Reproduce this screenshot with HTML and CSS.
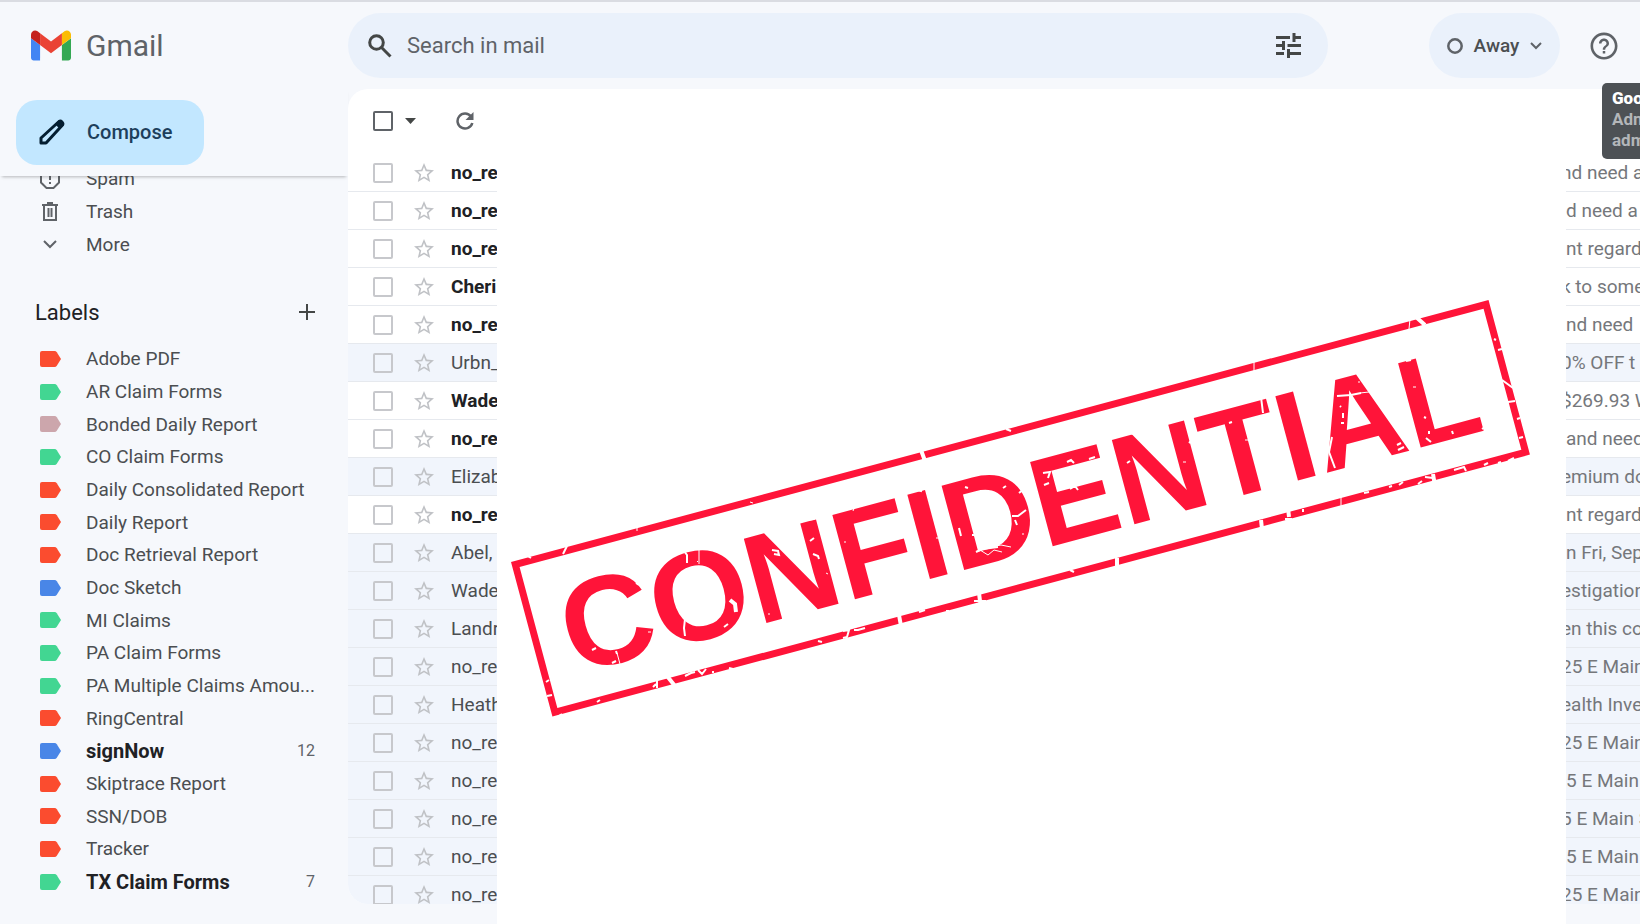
FILE: index.html
```html
<!DOCTYPE html>
<html lang="en">
  <head>
    <meta charset="utf-8">
    <title>Gmail</title>
    <link rel="stylesheet" href="styles.css">
  </head>
  <body>
    <!-- Shared icons -->
    <svg class="sprite" aria-hidden="true">
      <symbol id="tag" viewBox="0 0 21 16">
        <path d="M2 0h12.500q1.500 0 2.300 1.200L21 8l-4.200 6.800Q16 16 14.500 16H2q-2 0-2-2V2q0-2 2-2z" />
      </symbol>
      <symbol id="star" viewBox="0 0 24 24">
        <path d="M22 9.240l-7.190-.62L12 2 9.190 8.630 2 9.240l5.460 4.730L5.820 21 12 17.270 18.180 21l-1.630-7.030L22 9.240zM12 15.400l-3.760 2.270 1-4.280-3.320-2.880 4.380-.38L12 6.100l1.710 4.040 4.380.38-3.320 2.880 1 4.280L12 15.400z" />
      </symbol>
    </svg>

    <header class="topbar">
      <div class="brand">
        <svg class="logo" viewBox="52 42 88 66">
          <path fill="#4285f4" d="M58 108h14V74L52 59v43c0 3.320 2.690 6 6 6" />
          <path fill="#34a853" d="M120 108h14c3.320 0 6-2.690 6-6V59l-20 15" />
          <path fill="#fbbc04" d="M120 48v26l20-15v-8c0-7.420-8.470-11.650-14.400-7.200" />
          <path fill="#ea4335" d="M72 74V48l24 18 24-18v26L96 92" />
          <path fill="#c5221f" d="M52 51v8l20 15V48l-5.600-4.200c-5.940-4.450-14.400-.22-14.400 7.200" />
        </svg>
        <span>Gmail</span>
      </div>
      <form class="search">
        <svg class="search-icon" viewBox="0 0 24 24" fill="none" stroke="#444746" stroke-width="3">
          <circle cx="8.500" cy="8.500" r="6.800" />
          <path d="M13.300 13.300L22.500 22.500" />
        </svg>
        <input type="text" placeholder="Search in mail" aria-label="Search in mail">
        <button type="button" class="icon-btn" aria-label="Show search options">
          <svg class="tune-icon" viewBox="0 0 25 25" fill="none" stroke="#444746" stroke-width="3">
            <path d="M0 4.500h14M17.500 4.500H25M18 0v9M0 12.500h7M11.500 12.500H25M7.500 8v9M0 20.500h8M12 20.500h13M12.500 16v9" />
          </svg>
        </button>
      </form>
      <div class="tools">
        <button type="button" class="status">
          <svg class="status-dot" viewBox="0 0 16 16" fill="none" stroke="#5f6368" stroke-width="2.500">
            <circle cx="8" cy="8" r="6.700" />
          </svg>
          Away
          <svg class="status-arrow" viewBox="0 0 12 8" fill="none" stroke="#5f6368" stroke-width="2">
            <path d="M1 1l5 5 5-5" />
          </svg>
        </button>
        <button type="button" class="icon-btn" aria-label="Support">
          <svg class="help-icon" viewBox="0 0 24 24" fill="#5f6368">
            <path d="M11 18h2v-2h-2v2zm1-16.800C6 1.200 1.200 6 1.200 12S6 22.800 12 22.800 22.800 18 22.800 12 18 1.200 12 1.200zm0 19.500c-4.800 0-8.700-3.900-8.700-8.700S7.200 3.300 12 3.300s8.700 3.900 8.700 8.700-3.900 8.700-8.700 8.700zM12 6c-2.210 0-4 1.790-4 4h2c0-1.100.9-2 2-2s2 .9 2 2c0 2-3 1.750-3 5h2c0-2.250 3-2.500 3-5 0-2.210-1.790-4-4-4z" />
          </svg>
        </button>
      </div>
      <div class="tooltip"><b>Google</b><span>Admin</span><span>admin</span></div>
    </header>

    <div class="layout">
      <aside class="sidebar">
        <div class="compose-wrap">
          <button type="button" class="compose">
            <svg viewBox="0 0 26 26" fill="none" stroke="#041e31" stroke-width="3" stroke-linejoin="round">
              <path d="M2 24v-5L20 2.500q1.500-1 3 .5t.5 3L7 24z" />
              <path d="M18 3l5 5" stroke-width="6" />
            </svg>
            Compose
          </button>
        </div>
        <nav class="nav">
          <ul class="folders">
            <li>
              <a href="#">
                <svg viewBox="0 0 20 20" fill="none" stroke="#5f6368" stroke-width="2">
                  <path d="M6.500 1h7L19 6.500v7L13.500 19h-7L1 13.500v-7zM10 5v6M10 13v2" />
                </svg>
                <span>Spam</span>
              </a>
            </li>
            <li>
              <a href="#">
                <svg viewBox="0 0 20 20" fill="none" stroke="#5f6368" stroke-width="2">
                  <path d="M2 3h16M7 1h6M4 3v15h12V3M8.500 6v9M11.500 6v9" />
                </svg>
                <span>Trash</span>
              </a>
            </li>
            <li>
              <a href="#">
                <svg viewBox="0 0 20 20" fill="none" stroke="#5f6368" stroke-width="2">
                  <path d="M4 7l6 6 6-6" />
                </svg>
                <span>More</span>
              </a>
            </li>
          </ul>
          <div class="labels-head">
            <h2>Labels</h2>
            <button type="button" class="icon-btn" aria-label="Create new label">
              <svg class="plus-icon" viewBox="0 0 16 16" fill="none" stroke="#444746" stroke-width="2">
                <path d="M8 0v16M0 8h16" />
              </svg>
            </button>
          </div>
          <ul class="labels">
            <li><a href="#"><svg class="red"><use href="#tag" /></svg><span>Adobe PDF</span></a></li>
            <li><a href="#"><svg class="green"><use href="#tag" /></svg><span>AR Claim Forms</span></a></li>
            <li><a href="#"><svg class="pink"><use href="#tag" /></svg><span>Bonded Daily Report</span></a></li>
            <li><a href="#"><svg class="green"><use href="#tag" /></svg><span>CO Claim Forms</span></a></li>
            <li><a href="#"><svg class="red"><use href="#tag" /></svg><span>Daily Consolidated Report</span></a></li>
            <li><a href="#"><svg class="red"><use href="#tag" /></svg><span>Daily Report</span></a></li>
            <li><a href="#"><svg class="red"><use href="#tag" /></svg><span>Doc Retrieval Report</span></a></li>
            <li><a href="#"><svg class="blue"><use href="#tag" /></svg><span>Doc Sketch</span></a></li>
            <li><a href="#"><svg class="green"><use href="#tag" /></svg><span>MI Claims</span></a></li>
            <li><a href="#"><svg class="green"><use href="#tag" /></svg><span>PA Claim Forms</span></a></li>
            <li><a href="#"><svg class="green"><use href="#tag" /></svg><span>PA Multiple Claims Amou...</span></a></li>
            <li><a href="#"><svg class="red"><use href="#tag" /></svg><span>RingCentral</span></a></li>
            <li class="new"><a href="#"><svg class="blue"><use href="#tag" /></svg><span>signNow</span><em>12</em></a></li>
            <li><a href="#"><svg class="red"><use href="#tag" /></svg><span>Skiptrace Report</span></a></li>
            <li><a href="#"><svg class="red"><use href="#tag" /></svg><span>SSN/DOB</span></a></li>
            <li><a href="#"><svg class="red"><use href="#tag" /></svg><span>Tracker</span></a></li>
            <li class="new"><a href="#"><svg class="green"><use href="#tag" /></svg><span>TX Claim Forms</span><em>7</em></a></li>
          </ul>
        </nav>
      </aside>

      <main class="mail">
        <div class="inbox">
          <div class="toolbar">
            <input type="checkbox" class="check" aria-label="Select all">
            <svg class="caret" viewBox="0 0 11 6" fill="#444746"><path d="M0 0h11L5.500 6z" /></svg>
            <button type="button" class="icon-btn" aria-label="Refresh">
              <svg class="refresh-icon" viewBox="0 0 18 18" fill="none" stroke="#5f6368" stroke-width="2.500">
                <path d="M15 4.500A7.500 7.500 0 1 0 16.300 11" />
                <path d="M17.500 0v8h-8z" fill="#5f6368" stroke="none" />
              </svg>
            </button>
          </div>
          <ul class="rows">
            <li class="unread"><input type="checkbox" class="check" aria-label="Select"><svg class="star"><use href="#star" /></svg><span class="sender">no_re</span><span class="snippet cut">nd need a</span></li>
            <li class="unread"><input type="checkbox" class="check" aria-label="Select"><svg class="star"><use href="#star" /></svg><span class="sender">no_re</span><span class="snippet">d need a</span></li>
            <li class="unread"><input type="checkbox" class="check" aria-label="Select"><svg class="star"><use href="#star" /></svg><span class="sender">no_re</span><span class="snippet">nt regard</span></li>
            <li class="unread"><input type="checkbox" class="check" aria-label="Select"><svg class="star"><use href="#star" /></svg><span class="sender">Cheri</span><span class="snippet cut">k to some</span></li>
            <li class="unread"><input type="checkbox" class="check" aria-label="Select"><svg class="star"><use href="#star" /></svg><span class="sender">no_re</span><span class="snippet">nd need</span></li>
            <li><input type="checkbox" class="check" aria-label="Select"><svg class="star"><use href="#star" /></svg><span class="sender">Urbn_</span><span class="snippet cut">0% OFF t</span></li>
            <li class="unread"><input type="checkbox" class="check" aria-label="Select"><svg class="star"><use href="#star" /></svg><span class="sender">Wade</span><span class="snippet cut">$269.93 W</span></li>
            <li class="unread"><input type="checkbox" class="check" aria-label="Select"><svg class="star"><use href="#star" /></svg><span class="sender">no_re</span><span class="snippet">and need</span></li>
            <li><input type="checkbox" class="check" aria-label="Select"><svg class="star"><use href="#star" /></svg><span class="sender">Elizab</span><span class="snippet cut">emium do</span></li>
            <li class="unread"><input type="checkbox" class="check" aria-label="Select"><svg class="star"><use href="#star" /></svg><span class="sender">no_re</span><span class="snippet">nt regard</span></li>
            <li><input type="checkbox" class="check" aria-label="Select"><svg class="star"><use href="#star" /></svg><span class="sender">Abel,</span><span class="snippet">n Fri, Sep</span></li>
            <li><input type="checkbox" class="check" aria-label="Select"><svg class="star"><use href="#star" /></svg><span class="sender">Wade</span><span class="snippet cut">estigation</span></li>
            <li><input type="checkbox" class="check" aria-label="Select"><svg class="star"><use href="#star" /></svg><span class="sender">Landr</span><span class="snippet cut">en this co</span></li>
            <li><input type="checkbox" class="check" aria-label="Select"><svg class="star"><use href="#star" /></svg><span class="sender">no_re</span><span class="snippet cut">25 E Main</span></li>
            <li><input type="checkbox" class="check" aria-label="Select"><svg class="star"><use href="#star" /></svg><span class="sender">Heath</span><span class="snippet cut">ealth Inve</span></li>
            <li><input type="checkbox" class="check" aria-label="Select"><svg class="star"><use href="#star" /></svg><span class="sender">no_re</span><span class="snippet cut">25 E Main</span></li>
            <li><input type="checkbox" class="check" aria-label="Select"><svg class="star"><use href="#star" /></svg><span class="sender">no_re</span><span class="snippet">5 E Main</span></li>
            <li><input type="checkbox" class="check" aria-label="Select"><svg class="star"><use href="#star" /></svg><span class="sender">no_re</span><span class="snippet cut">5 E Main S</span></li>
            <li><input type="checkbox" class="check" aria-label="Select"><svg class="star"><use href="#star" /></svg><span class="sender">no_re</span><span class="snippet">5 E Main</span></li>
            <li><input type="checkbox" class="check" aria-label="Select"><svg class="star"><use href="#star" /></svg><span class="sender">no_re</span><span class="snippet cut">25 E Main</span></li>
          </ul>
        </div>

        <!-- Cover sheet over the private part of the list -->
        <div class="redacted">
          <svg class="stamp" viewBox="0 0 1020 418">
            <g transform="translate(1 263) rotate(-15)">
              <rect class="stamp-frame" x="3.500" y="3.500" width="1005" height="153" />
              <text class="stamp-text" x="32" y="125">CONFIDENTIAL</text>
            </g>
            <!-- worn spots -->
            <g class="wear">
              <path class="thick" d="M411 151l4 11M389 316l2 11M469 294l1 8 2 6M157 377l8 10M751 221l1 9M778 209l1 9M906 18l9 8M220 301l5 4 1 8M607 259v8M923 175l2 12" />
              <path class="mid" d="M16 256l5 3M57 247l-4 8M126 284l3 2M82 351l4-2M106 352l1 3M102 364l4-2M174 252l3 4v8M175 320l-1 9 1 8M214 328l4-3M262 251l6 1 1 4-5-1M297 221l7-1 4-2M300 242l4-3M303 255l5 2 1 3M455 188l3 1M408 191l3 1 1-3M449 229l2 8M462 236h2M466 253l6-3 8-1 8-1M493 189l3-2M509 194l5-4M502 217h6l8-6M505 221l2 5M553 152l5-1M557 163l4-2 3 3M533 174l7-1-2 6M534 186l5-2M560 190l5-3 3 4M579 160l6-2M586 179v3M619 133l4 2M617 164l3-2M679 144l4-4M719 124l3-1M751 98l2 16M827 97l14-1 10-2M830 107l1 1M833 114v5M831 124h3M822 138l-3 15 6 16M887 146l4-2M888 151l6-3M896 62l5-1M914 118l2 1M924 115v3M919 132v3M916 139l5 4M942 132l1 3M972 130l3-2M496 130l5 2M984 40l2 1M988 51l4-1M992 81l11 8M998 103l7-1M1007 120l3-1M1009 139l4-1M998 162l6-3M988 164l3-1M974 166l4-2M944 171l10-3 2 4M915 178l8 1M908 185l4-3M889 186l4-3M879 188l3-1M854 194l5-1M793 210v3M775 220h7M560 271l4 2M409 313l6-2M436 312h3M333 332l6-1-2 7-4 1M344 331h4l7-2M308 342l4 1M219 369l4 1M203 372v2M188 371l4 4 4-5M175 377l6-3 4-1M147 382v7M143 388l3-3M87 403l3-2M49 417l3-2M36 383l3-2M37 397l5-1M464 302h12" />
              <path class="thin" d="M189 248v17M127 227v5M240 203l3 1M187 262l1 1M107 354l3 11M334 243h2M343 212l2-5M426 239h2M316 274l2 1M258 315h2M470 251l8 5 6-5 8 2M481 248l10-2 10 2M495 237h3M512 235h2M556 176l-9 3M673 163h3M661 173l2 2M735 141h3M744 62v10M758 92l3 12M806 172l2 3M850 94l9-1M848 83h2M903 88h3M831 198v10M900 20l-1 10M138 333h3M244 316l3 2M1002 168l4-2" />
            </g>
          </svg>
        </div>
      </main>
    </div>
  </body>
</html>
```

FILE: styles.css
```css
:root {
  --bg: #f6f8fc;
  --surface: #fff;
  --pill: #eaf1fb;
  --read: #f1f5fc;
  --line: #e6e9ee;
  --text: #202124;
  --text-mid: #4b4e51;
  --text-light: #5f6368;
  --stamp: #ff1439;
}

* {
  box-sizing: border-box;
}

body {
  margin: 0;
  height: 100vh;
  display: flex;
  flex-direction: column;
  overflow: hidden;
  background: var(--bg);
  border-top: 2px solid #dadce2;
  font-family: Roboto, "Liberation Sans", sans-serif;
  font-size: 19px;
  color: var(--text-mid);
}

ul {
  list-style: none;
  margin: 0;
  padding: 0;
}

button {
  font-family: inherit;
  border: none;
  cursor: pointer;
}

svg {
  flex: none;
  display: block;
}

.sprite {
  position: absolute;
  width: 0;
  height: 0;
}

.icon-btn {
  background: none;
  padding: 0;
}

/* Header */
.topbar {
  position: relative;
  z-index: 3;
  flex: none;
  display: flex;
  align-items: center;
  height: 87px;
}

.brand {
  flex: none;
  display: flex;
  align-items: center;
  gap: 15px;
  width: 348px;
  padding-left: 31px;
  font-size: 30px;
  color: var(--text-light);
}

.logo {
  width: 40px;
  height: 31px;
}

.search {
  flex: 1;
  display: flex;
  align-items: center;
  height: 65px;
  padding: 0 27px 0 20px;
  border-radius: 33px;
  background: var(--pill);
}

.search-icon {
  width: 24px;
  height: 24px;
}

.search input {
  flex: 1;
  min-width: 0;
  margin-left: 15px;
  padding: 0;
  border: none;
  outline: none;
  background: none;
  font-family: inherit;
  font-size: 22px;
}

.search input::placeholder {
  color: var(--text-light);
}

.tune-icon {
  width: 25px;
  height: 25px;
}

.tools {
  flex: none;
  display: flex;
  align-items: center;
  gap: 29px;
  width: 312px;
  padding-left: 101px;
}

.status {
  display: flex;
  align-items: center;
  justify-content: center;
  gap: 11px;
  width: 131px;
  height: 65px;
  border-radius: 33px;
  background: var(--pill);
  color: var(--text-mid);
  font-size: 19px;
  font-weight: 500;
}

.status-dot {
  width: 16px;
  height: 16px;
}

.status-arrow {
  width: 12px;
  height: 8px;
}

.help-icon {
  width: 30px;
  height: 30px;
}

.tooltip {
  position: absolute;
  top: 81px;
  right: 0;
  display: flex;
  flex-direction: column;
  width: 38px;
  height: 76px;
  padding: 5px 0 0 10px;
  overflow: hidden;
  border-radius: 5px 0 0 5px;
  background: #4d5155;
  color: #b3b6b9;
  font-size: 17px;
  font-weight: 700;
  line-height: 21px;
}

.tooltip b {
  color: #fff;
}

.layout {
  flex: 1;
  display: flex;
  min-height: 0;
}

/* Sidebar */
.sidebar {
  flex: none;
  display: flex;
  flex-direction: column;
  width: 348px;
}

.compose-wrap {
  position: relative;
  flex: none;
  height: 87px;
  padding: 11px 0 0 16px;
  background: var(--bg);
  box-shadow: 0 3px 3px -2px rgba(60, 64, 67, 0.35);
}

.compose {
  display: flex;
  align-items: center;
  gap: 22px;
  width: 188px;
  height: 65px;
  padding: 0 0 2px 23px;
  border-radius: 21px;
  background: #c2e7ff;
  color: #1d3f5c;
  font-size: 20px;
  font-weight: 500;
}

.compose svg {
  width: 26px;
  height: 26px;
}

.nav {
  flex: 1;
  min-height: 0;
  overflow: hidden;
}

.folders {
  margin-top: -14px;
}

.nav li {
  height: 33px;
}

.nav li:nth-child(3n) {
  height: 32px;
}

.nav a {
  display: flex;
  align-items: center;
  height: 100%;
  padding: 0 33px 0 40px;
  color: var(--text-mid);
  text-decoration: none;
}

.nav a svg {
  width: 20px;
  height: 20px;
  margin-right: 26px;
}

.nav a span {
  flex: 1;
  white-space: nowrap;
}

.labels-head {
  display: flex;
  align-items: center;
  justify-content: space-between;
  height: 82px;
  padding: 22px 33px 0 35px;
}

.labels-head h2 {
  margin: 0;
  color: var(--text);
  font-size: 22px;
  font-weight: 400;
}

.plus-icon {
  width: 16px;
  height: 16px;
}

.labels a svg {
  width: 21px;
  height: 16px;
  margin-right: 25px;
}

.red {
  fill: #fb4c2f;
}

.green {
  fill: #42d692;
}

.pink {
  fill: #cca6ac;
}

.blue {
  fill: #4986e7;
}

.nav .new span {
  color: var(--text);
  font-size: 20px;
  font-weight: 700;
}

.new em {
  color: var(--text-light);
  font-size: 16px;
  font-style: normal;
}

/* Mail list */
.mail {
  position: relative;
  z-index: 1;
  flex: 1;
  min-width: 0;
  padding-bottom: 20px;
}

.inbox {
  display: flex;
  flex-direction: column;
  height: 100%;
  overflow: hidden;
  border-radius: 20px 0 0 20px;
  background: var(--surface);
}

.toolbar {
  flex: none;
  display: flex;
  align-items: center;
  height: 65px;
  padding: 0 0 2px 25px;
}

.check {
  appearance: none;
  flex: none;
  width: 20px;
  height: 20px;
  margin: 0;
  border: 2px solid #c7c8cc;
  border-radius: 2px;
}

.toolbar .check {
  border-color: var(--text-light);
}

.caret {
  width: 11px;
  height: 6px;
  margin: 0 40px 0 12px;
}

.refresh-icon {
  width: 18px;
  height: 18px;
}

.rows li {
  display: flex;
  align-items: center;
  height: 38px;
  padding-left: 25px;
  border-bottom: 1px solid var(--line);
  background: var(--read);
}

.rows .unread {
  background: var(--surface);
}

.star {
  width: 24px;
  height: 24px;
  margin: 0 15px 0 19px;
  fill: #c0c2c6;
}

.sender {
  flex: 1;
  white-space: nowrap;
}

.unread .sender {
  color: var(--text);
  font-weight: 700;
}

.snippet {
  flex: none;
  width: 74px;
  overflow: hidden;
  white-space: nowrap;
  color: #75777b;
}

.cut {
  text-indent: -5px;
}

/* Stamp */
.redacted {
  position: absolute;
  top: 0;
  right: 74px;
  bottom: 0;
  left: 149px;
  display: flex;
  align-items: center;
  justify-content: center;
  padding: 2px 36px 0 13px;
  background: var(--surface);
}

.stamp {
  width: 100%;
  max-width: 1020px;
}

.stamp-frame {
  fill: none;
  stroke: var(--stamp);
  stroke-width: 7;
}

.stamp-text {
  fill: var(--stamp);
  font-family: "Liberation Sans", Arial, sans-serif;
  font-size: 127px;
  font-weight: 700;
}

.wear {
  fill: none;
  stroke: var(--surface);
}

.thick {
  stroke-width: 4;
}

.mid {
  stroke-width: 2;
}

.thin {
  stroke-width: 1;
}
```
